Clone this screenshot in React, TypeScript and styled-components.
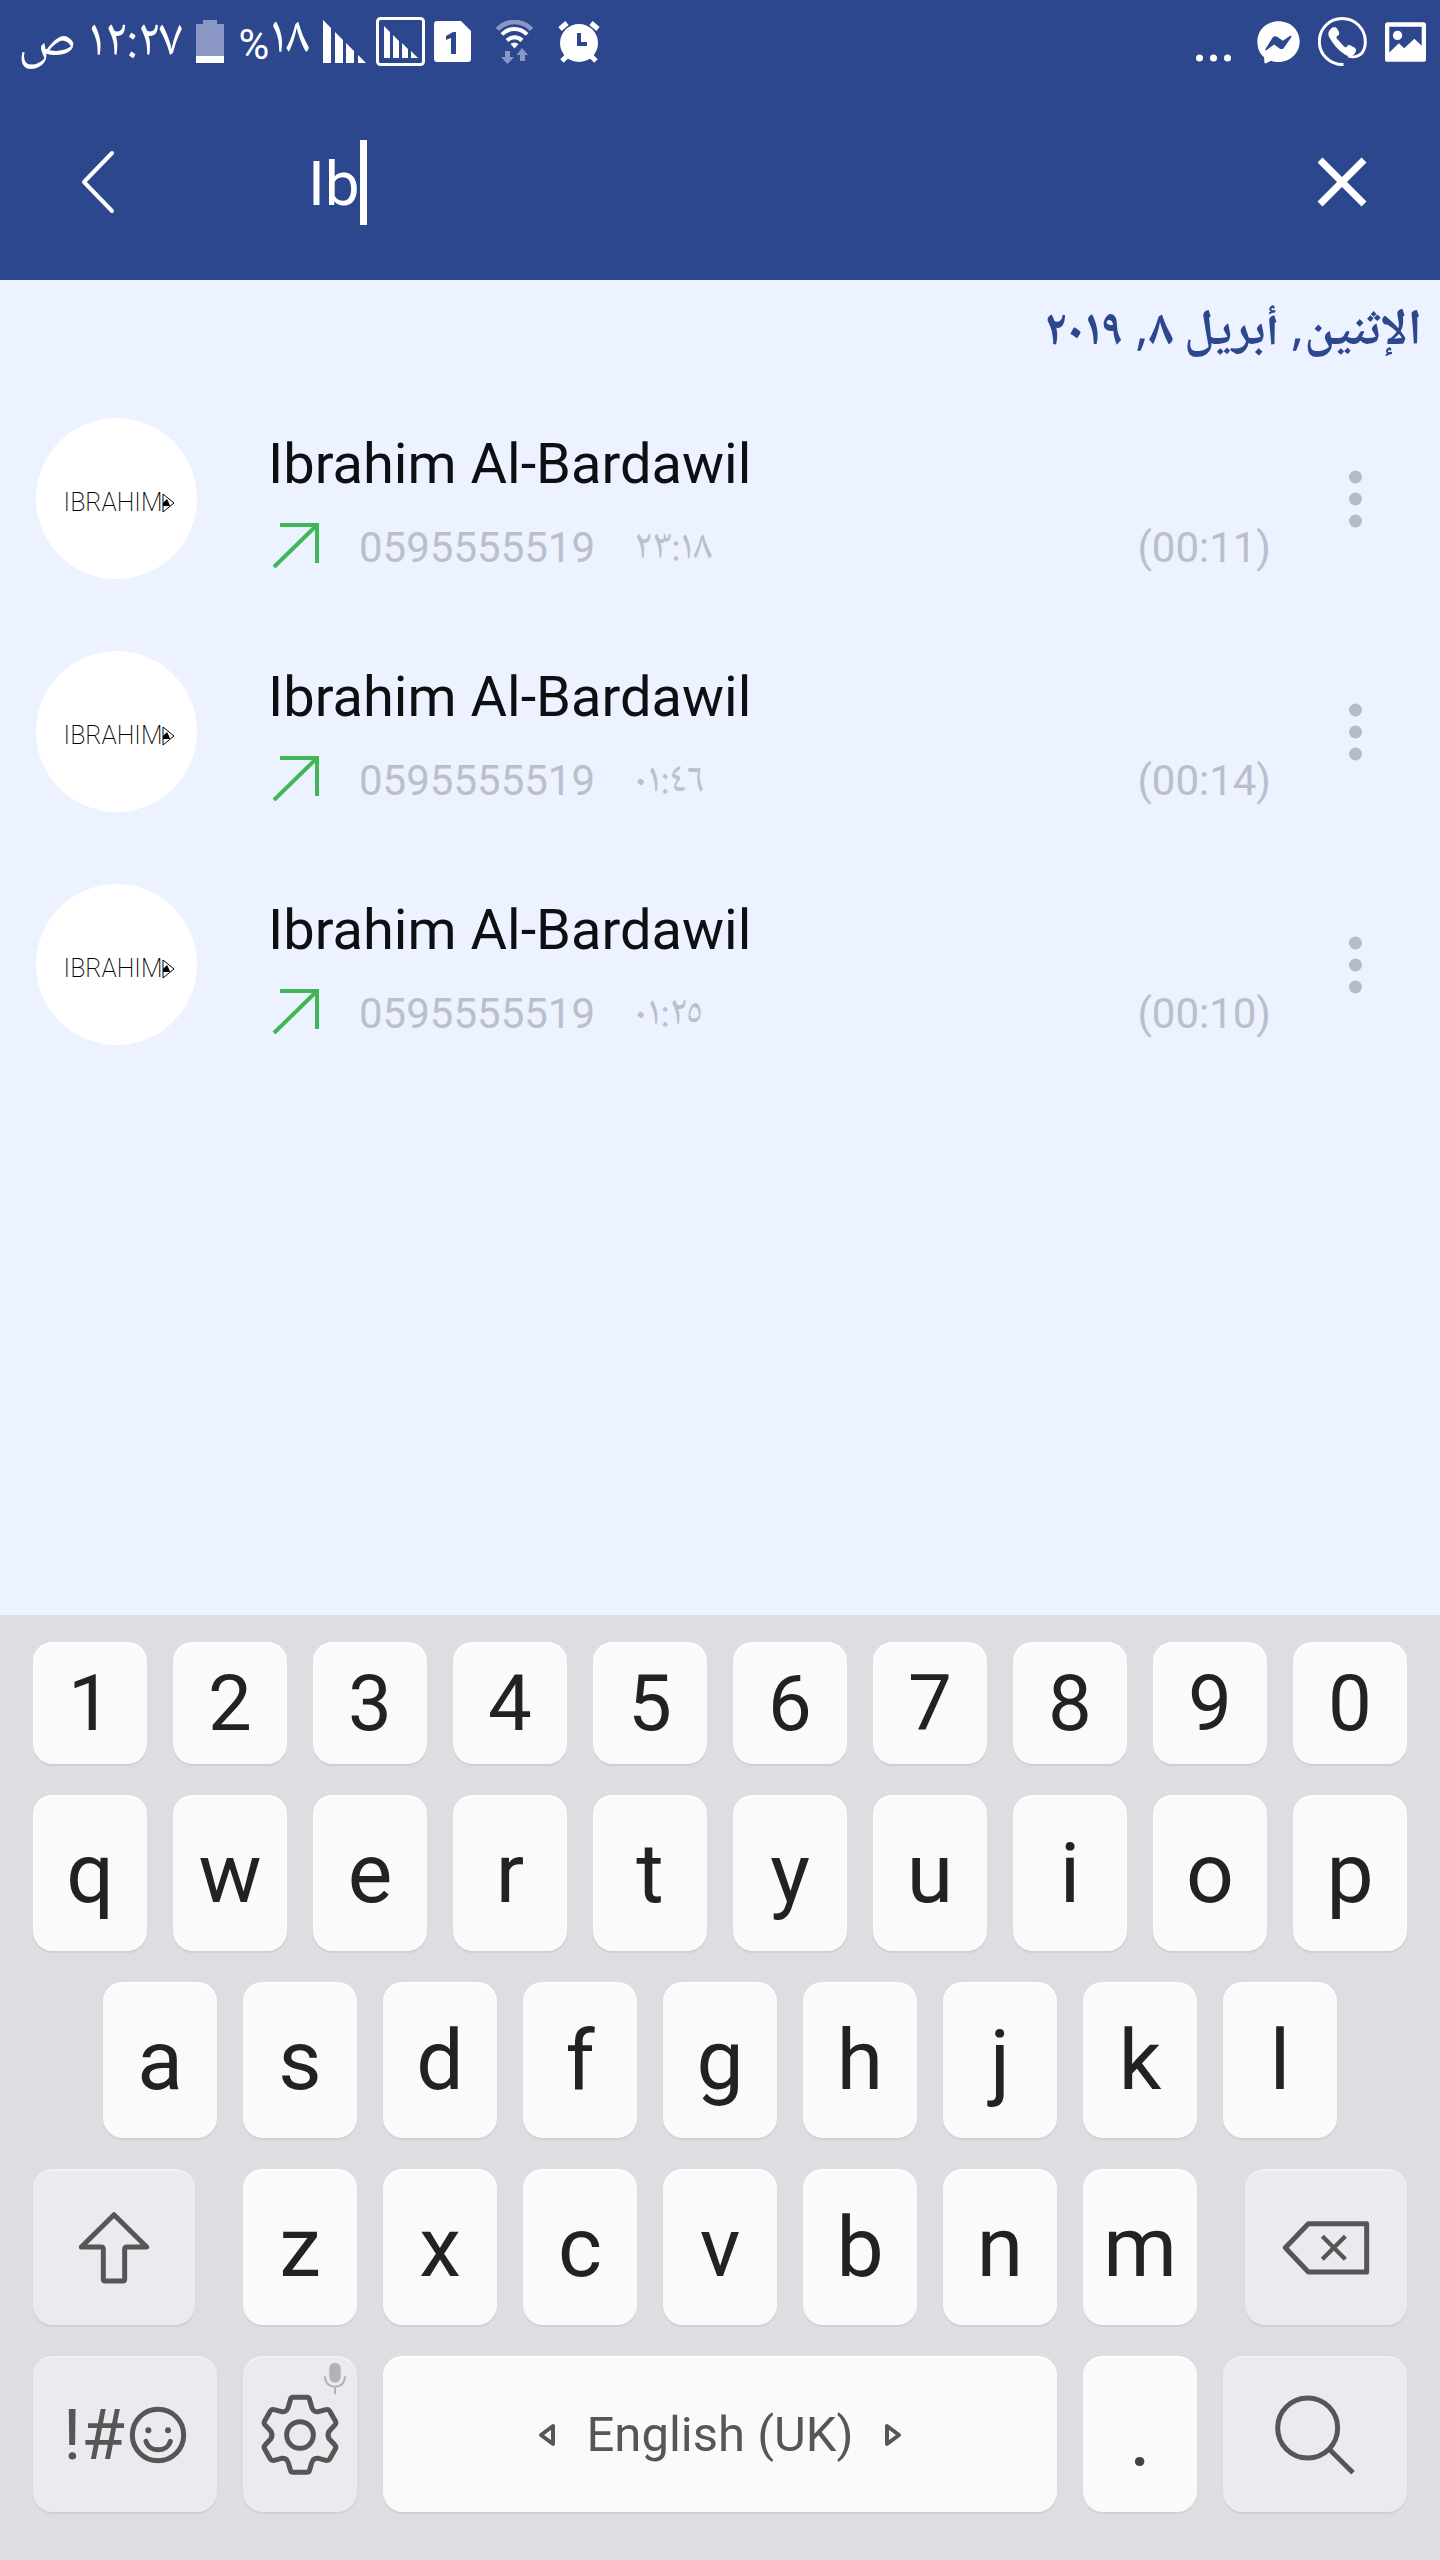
import React from "react";
import styled, { createGlobalStyle } from "styled-components";

const color = {
  brand: "#2d478f",
  page: "#ecf2ff",
  muted: "#bbbfcc",
  dots: "#b6bbc8",
  green: "#42b757",
  board: "#dddee2",
  key: "#fafafa",
  keyAlt: "#e9ebef",
  ink: "#222222",
  glyph: "#555656",
};

const latin = `Roboto, "Noto Naskh Arabic", "DejaVu Sans", sans-serif`;
const arabic = `"Noto Naskh Arabic UI", "Noto Naskh Arabic", "Noto Sans Arabic", "DejaVu Sans", sans-serif`;

const GlobalStyle = createGlobalStyle`
  *, *::before, *::after { box-sizing: border-box; }
  body { margin: 0; background: ${color.page}; font-family: ${latin}; }
  button { appearance: none; border: 0; padding: 0; margin: 0; background: none; font: inherit; color: inherit; cursor: pointer; }
  svg { display: block; flex: none; }
`;

const Screen = styled.div`
  min-height: 100vh;
  display: flex;
  flex-direction: column;
  background: ${color.page};
`;

const Header = styled.header`
  background: ${color.brand};
  color: #ffffff;
`;

const StatusBar = styled.div`
  height: 84px;
  padding: 0 14px 0 18px;
  display: flex;
  align-items: center;
  justify-content: space-between;
`;

const StatusGroup = styled.div<{ $gap: number }>`
  display: flex;
  align-items: center;
  gap: ${(p) => p.$gap}px;
`;

const StatusText = styled.span`
  font-family: ${arabic};
  font-size: 53px;
  line-height: 56px;
  white-space: nowrap;
`;

const Percent = styled.span`
  font-family: ${latin};
  font-size: 42px;
`;

const SearchBar = styled.form`
  height: 196px;
  padding: 0 71px;
  display: flex;
  align-items: center;
`;

const BarButton = styled.button`
  display: grid;
  place-items: center;
  width: 54px;
  height: 96px;
`;

const SearchField = styled.div`
  flex: 1;
  display: flex;
  align-items: center;
  margin-left: 183px;
`;

const SearchInput = styled.input`
  field-sizing: content;
  min-width: 0;
  max-width: 100%;
  border: 0;
  padding: 4px 0 0;
  outline: none;
  background: transparent;
  color: inherit;
  font-family: ${latin};
  font-size: 62px;
  line-height: 84px;
`;

const Caret = styled.span`
  width: 7px;
  height: 85px;
  background: #ffffff;
`;

const Main = styled.main`
  flex: 1;
`;

const DateHeading = styled.h2`
  margin: 0;
  padding: 18px 18px 0;
  height: 102px;
  color: ${color.brand};
  font-family: ${arabic};
  font-size: 50px;
  line-height: 68px;
  font-weight: 700;
`;

const CallList = styled.ul`
  list-style: none;
  margin: 0;
  padding: 0;
`;

const CallRow = styled.li`
  height: 233px;
  padding: 0 48px 0 36px;
  display: flex;
  align-items: center;
`;

const Avatar = styled.div`
  flex: none;
  display: flex;
  align-items: center;
  justify-content: center;
  width: 161px;
  height: 161px;
  padding: 8px 0 0 6px;
  border-radius: 50%;
  background: #ffffff;
  color: #000000;
  font-size: 25px;
  line-height: 32px;
  font-weight: 200;
`;

const CallBody = styled.div`
  flex: 1;
  padding-top: 7px;
  margin-left: 71px;
`;

const CallName = styled.h3`
  margin: 0 0 25px;
  color: #0e0f12;
  font-size: 56px;
  line-height: 66px;
  font-weight: 400;
`;

const CallMeta = styled.div`
  display: flex;
  align-items: center;
  color: ${color.muted};
  font-size: 42px;
  line-height: 50px;
`;

const DirectionMark = styled.span`
  padding: 0 0 6px 4px;
`;

const CallNumber = styled.span`
  margin: 0 39px;
`;

const CallTime = styled.time`
  font-family: ${arabic};
`;

const Duration = styled.span`
  margin-left: auto;
`;

const MoreButton = styled.button`
  display: grid;
  place-items: center;
  width: 74px;
  height: 96px;
  margin-left: 47px;
`;

const Keyboard = styled.section`
  display: flex;
  flex-direction: column;
  gap: 31px;
  padding: 27px 33px 48px;
  background: ${color.board};
`;

const KeyRow = styled.div<{ $columns: string; $gap?: number; $inset?: number }>`
  display: grid;
  grid-template-columns: ${(p) => p.$columns};
  column-gap: ${(p) => p.$gap ?? 26}px;
  padding: 0 ${(p) => p.$inset ?? 0}px;
`;

const Key = styled.button<{ $alt?: boolean; $short?: boolean }>`
  position: relative;
  display: flex;
  align-items: center;
  justify-content: center;
  min-width: 0;
  height: ${(p) => (p.$short ? 122 : 156)}px;
  padding-top: 2px;
  border-radius: 20px;
  background: ${(p) => (p.$alt ? color.keyAlt : color.key)};
  box-shadow: 0 2px 1px #cfd0d5, inset 0 2px 0 ${(p) => (p.$alt ? "#f0f1f5" : "#ffffff")};
  color: ${(p) => (p.$alt ? color.glyph : color.ink)};
  font-size: ${(p) => (p.$short ? 78 : 84)}px;
  line-height: 98px;
`;

const SpaceKey = styled(Key)`
  gap: 30px;
  color: ${color.glyph};
  font-size: 49px;
`;

const PeriodKey = styled(Key)`
  padding-top: 8px;
  color: #444444;
`;

const SymbolKey = styled(Key)`
  gap: 4px;
  font-size: 71px;
`;

const MicHint = styled.span`
  position: absolute;
  top: 6px;
  right: 10px;
`;

const SignalBars = () => (
  <svg width="44" height="44" viewBox="0 0 44 44" fill="#fff" aria-hidden="true">
    <path d="M0 0l8 8v35H0zM12 12l8 8v23h-8zM23 23l8 8v12h-8zM35 35l8 8h-8z" />
  </svg>
);

const BoxedSignal = () => (
  <svg width="49" height="50" viewBox="0 0 49 50" fill="#fff" aria-hidden="true">
    <rect x="1.5" y="1.5" width="46" height="46" rx="3" fill="none" stroke="#fff" strokeWidth="3" />
    <path d="M8 9l6 6v26H8zM17 18l6 6v17h-6zM26 26l6 6v9h-6zM35 34l7 7h-7z" />
  </svg>
);

const Battery = () => (
  <svg width="28" height="44" viewBox="0 0 28 44" aria-hidden="true">
    <path d="M7 0h14v4h7v32H0V4h7z" fill="#8a97c4" />
    <path d="M0 36h28v7H0z" fill="#fff" />
  </svg>
);

const SimOne = () => (
  <svg width="37" height="42" viewBox="0 0 37 42" aria-hidden="true">
    <path d="M3 0h24l10 10v28a3 3 0 0 1-3 3H3a3 3 0 0 1-3-3V3a3 3 0 0 1 3-3z" fill="#fff" />
    <path d="M12 15l7-4h3v22h-5V17l-5 2z" fill={color.brand} />
  </svg>
);

const Wifi = () => (
  <svg width="37" height="44" viewBox="0 0 37 44" fill="none" aria-hidden="true">
    <path d="M1.5 9.500a23 23 0 0 1 34 0" stroke="#8a97c4" strokeWidth="4.500" />
    <path d="M6 14.500a17 17 0 0 1 25 0M11 20.500a10.500 10.500 0 0 1 15 0" stroke="#fff" strokeWidth="4" />
    <path d="M18.500 28.500l-4-4.500a6 6 0 0 1 8 0z" fill="#fff" />
    <path d="M9 31h5v6h4l-6.500 7-6.500-7h4zM24 41h5v-6h3l-6-7-5.500 7h3.500z" fill="#8a97c4" />
  </svg>
);

const Alarm = () => (
  <svg width="42" height="42" viewBox="0 0 42 42" aria-hidden="true">
    <circle cx="21" cy="22" r="19" fill="#fff" />
    <path d="M2 8l7-6M33 2l7 6M4 40l6-6M38 40l-6-6" stroke="#fff" strokeWidth="5" />
    <path d="M21 12v11h8" fill="none" stroke={color.brand} strokeWidth="4" />
  </svg>
);

const Ellipsis = () => (
  <svg width="36" height="44" viewBox="0 0 36 44" fill="#fff" aria-hidden="true">
    <circle cx="3.500" cy="38" r="3.500" />
    <circle cx="17.500" cy="38" r="3.500" />
    <circle cx="31.500" cy="38" r="3.500" />
  </svg>
);

const Messenger = () => (
  <svg width="43" height="43" viewBox="295 65 128 128" aria-hidden="true">
    <path d="M359 66c36 0 63 26 63 60s-27 61-63 61c-8 0-15-1-22-4l-15 8c-3 1-5 0-5-3l-1-15c-13-11-20-27-20-47 0-34 27-60 63-60z" fill="#fff" />
    <path d="M320 149l21-34c3-5 9-6 14-3l17 12 21-14c3-2 6 0 4 3l-21 31c-3 5-9 6-14 3l-16-12-22 16c-3 2-6 1-4-2z" fill={color.brand} />
  </svg>
);

const PhoneCall = () => (
  <svg width="49" height="50" viewBox="474 53 148 150" aria-hidden="true">
    <path d="M551 196C511 197 478 166 478 127S508 57 547 57s70 31 70 70-27 52-52 43" fill="none" stroke="#fff" strokeWidth="9" />
    <path d="M513 88c6-6 14-6 19 0l5 9c3 6 1 10-5 13-3 2-3 5 0 9l20 22c4 4 6 4 9 1 3-5 8-6 13-3l11 6c6 4 4 13-1 19-9 9-20 8-30 1-20-14-35-31-45-50-6-10-4-20 4-27z" fill="#fff" />
  </svg>
);

const Picture = () => (
  <svg width="41" height="40" viewBox="674 66 124 120" aria-hidden="true">
    <path fillRule="evenodd" d="M682 66h108a8 8 0 0 1 8 8v104a8 8 0 0 1-8 8H682a8 8 0 0 1-8-8V74a8 8 0 0 1 8-8zm5 14v78l29-28 16 15 31-29 22 21V80z" fill="#fff" />
    <circle cx="712" cy="106" r="14" fill="#fff" />
  </svg>
);

const BackIcon = () => (
  <svg width="34" height="64" viewBox="0 0 34 64" fill="none" stroke="#fff" strokeWidth="4" strokeLinecap="round" strokeLinejoin="round" aria-hidden="true">
    <path d="M31 3L3 32l28 29" />
  </svg>
);

const ClearIcon = () => (
  <svg width="50" height="50" viewBox="0 0 50 50" stroke="#fff" strokeWidth="7" aria-hidden="true">
    <path d="M3 3l44 44M47 3L3 47" />
  </svg>
);

const Triangle = () => (
  <svg width="13" height="20" viewBox="0 0 13 20" aria-hidden="true">
    <path d="M1 1l11 9L1 19z" fill="none" stroke="#000" />
    <path d="M1 10l4-4 2 4 1 3H1z" />
  </svg>
);

const OutgoingIcon = () => (
  <svg width="48" height="46" viewBox="0 0 48 46" fill="none" stroke={color.green} strokeWidth="4" role="img" aria-label="Outgoing call">
    <path d="M8 3h37v38M45 3L2 45" />
  </svg>
);

const MoreIcon = () => (
  <svg width="13" height="58" viewBox="0 0 13 58" fill={color.dots} aria-hidden="true">
    <circle cx="6.500" cy="7" r="6.500" />
    <circle cx="6.500" cy="29" r="6.500" />
    <circle cx="6.500" cy="51" r="6.500" />
  </svg>
);

const glyphStroke = {
  fill: "none",
  stroke: color.glyph,
  strokeWidth: 15,
  strokeLinejoin: "round" as const,
  "aria-hidden": true,
};

const ShiftIcon = () => (
  <svg width="72" height="74" viewBox="234 212 216 222" {...glyphStroke}>
    <path d="M342 223L440 320H381Q374 320 374 327V416Q374 422 368 422H316Q310 422 310 416V327Q310 320 303 320H244Z" />
  </svg>
);

const BackspaceIcon = () => (
  <svg width="88" height="56" viewBox="966 239 264 168" {...glyphStroke}>
    <path d="M1045 250H1220V395H1045L976 322Z" />
    <path d="M1087 288l69 69M1156 288l-69 69" strokeWidth="13" />
  </svg>
);

const SmileyIcon = () => (
  <svg width="58" height="58" viewBox="381 796 174 174" {...glyphStroke}>
    <circle cx="468" cy="883" r="77" />
    <circle cx="439" cy="869" r="9" fill={color.glyph} stroke="none" />
    <circle cx="498" cy="869" r="9" fill={color.glyph} stroke="none" />
    <path d="M432 902c10 34 63 34 73 0" strokeLinecap="round" />
  </svg>
);

const GearIcon = () => (
  <svg width="80" height="82" viewBox="780 761 240 246" {...glyphStroke}>
    <path d="M880 771H920Q928 771 929 779L935 800Q939 816 955 814L978 808Q986 806 989 812L1006 842Q1010 849 1004 855L988 872Q980 884 988 896L1004 913Q1010 919 1006 926L989 956Q986 962 978 960L955 954Q939 952 935 968L929 988Q928 996 920 996H880Q872 996 871 988L865 968Q861 952 845 954L822 960Q814 962 811 956L794 926Q790 919 796 913L812 896Q820 884 812 872L796 855Q790 849 794 842L811 812Q814 806 822 808L845 814Q861 816 865 800L871 779Q872 771 880 771Z" />
    <circle cx="900" cy="884" r="40" />
  </svg>
);

const MicIcon = () => (
  <svg width="24" height="33" viewBox="969 665 72 99" fill="none" stroke="#b1b2b5" aria-hidden="true">
    <rect x="988" y="667" width="34" height="60" rx="17" fill="#b1b2b5" stroke="none" />
    <path d="M975 708c0 42 60 42 60 0M1005 740v22" strokeWidth="6" />
  </svg>
);

const SearchIcon = () => (
  <svg width="82" height="80" viewBox="942 763 246 240" {...glyphStroke}>
    <circle cx="1043" cy="862" r="90" />
    <path d="M1108 926l71 70" />
  </svg>
);

const HintArrow = ({ right }: { right?: boolean }) => (
  <svg width="18" height="24" viewBox="0 0 18 24" fill="none" stroke={color.glyph} strokeWidth="4" strokeLinejoin="round" aria-hidden="true">
    <path d={right ? "M3 3v18L15 12z" : "M15 3v18L3 12z"} />
  </svg>
);

const calls = [
  { time: "٢٣:١٨", duration: "(00:11)" },
  { time: "٠١:٤٦", duration: "(00:14)" },
  { time: "٠١:٢٥", duration: "(00:10)" },
];

const letterKeys = (letters: string) =>
  letters.split("").map((letter) => (
    <Key key={letter} type="button">
      {letter}
    </Key>
  ));

export default function App() {
  return (
    <Screen>
      <GlobalStyle />
      <Header>
        <StatusBar>
          <StatusGroup $gap={25}>
            <StatusGroup $gap={14}>
              <StatusText dir="rtl">١٢:٢٧ ص</StatusText>
              <Battery />
              <StatusText dir="rtl">
                ١٨<Percent>%</Percent>
              </StatusText>
              <StatusGroup $gap={9}>
                <SignalBars />
                <BoxedSignal />
                <SimOne />
              </StatusGroup>
            </StatusGroup>
            <Wifi />
            <Alarm />
          </StatusGroup>
          <StatusGroup $gap={25}>
            <Ellipsis />
            <StatusGroup $gap={18}>
              <Messenger />
              <PhoneCall />
              <Picture />
            </StatusGroup>
          </StatusGroup>
        </StatusBar>
        <SearchBar onSubmit={(e) => e.preventDefault()}>
          <BarButton type="button" aria-label="Back">
            <BackIcon />
          </BarButton>
          <SearchField>
            <SearchInput type="text" aria-label="Search calls" defaultValue="Ib" size={2} />
            <Caret />
          </SearchField>
          <BarButton type="reset" aria-label="Clear search">
            <ClearIcon />
          </BarButton>
        </SearchBar>
      </Header>
      <Main>
        <DateHeading dir="rtl">الإثنين, أبريل ٨, ٢٠١٩</DateHeading>
        <CallList>
          {calls.map((call) => (
            <CallRow key={call.time}>
              <Avatar>
                IBRAHIM
                <Triangle />
              </Avatar>
              <CallBody>
                <CallName>Ibrahim Al-Bardawil</CallName>
                <CallMeta>
                  <DirectionMark>
                    <OutgoingIcon />
                  </DirectionMark>
                  <CallNumber>0595555519</CallNumber>
                  <CallTime>{call.time}</CallTime>
                  <Duration>{call.duration}</Duration>
                </CallMeta>
              </CallBody>
              <MoreButton type="button" aria-label="More options">
                <MoreIcon />
              </MoreButton>
            </CallRow>
          ))}
        </CallList>
      </Main>
      <Keyboard aria-label="Keyboard">
        <KeyRow $columns="repeat(10, 1fr)">
          {"1234567890".split("").map((digit) => (
            <Key key={digit} type="button" $short>
              {digit}
            </Key>
          ))}
        </KeyRow>
        <KeyRow $columns="repeat(10, 1fr)">{letterKeys("qwertyuiop")}</KeyRow>
        <KeyRow $columns="repeat(9, 1fr)" $inset={70}>
          {letterKeys("asdfghjkl")}
        </KeyRow>
        <KeyRow $columns="162fr 954fr 162fr" $gap={48}>
          <Key type="button" $alt aria-label="Shift">
            <ShiftIcon />
          </Key>
          <KeyRow $columns="repeat(7, 1fr)">{letterKeys("zxcvbnm")}</KeyRow>
          <Key type="button" $alt aria-label="Backspace">
            <BackspaceIcon />
          </Key>
        </KeyRow>
        <KeyRow $columns="184fr 114fr 674fr 114fr 184fr">
          <SymbolKey type="button" $alt>
            <span>!#</span>
            <SmileyIcon />
          </SymbolKey>
          <Key type="button" $alt aria-label="Keyboard settings">
            <GearIcon />
            <MicHint>
              <MicIcon />
            </MicHint>
          </Key>
          <SpaceKey type="button">
            <HintArrow />
            English (UK)
            <HintArrow right />
          </SpaceKey>
          <PeriodKey type="button">.</PeriodKey>
          <Key type="button" $alt aria-label="Search">
            <SearchIcon />
          </Key>
        </KeyRow>
      </Keyboard>
    </Screen>
  );
}
